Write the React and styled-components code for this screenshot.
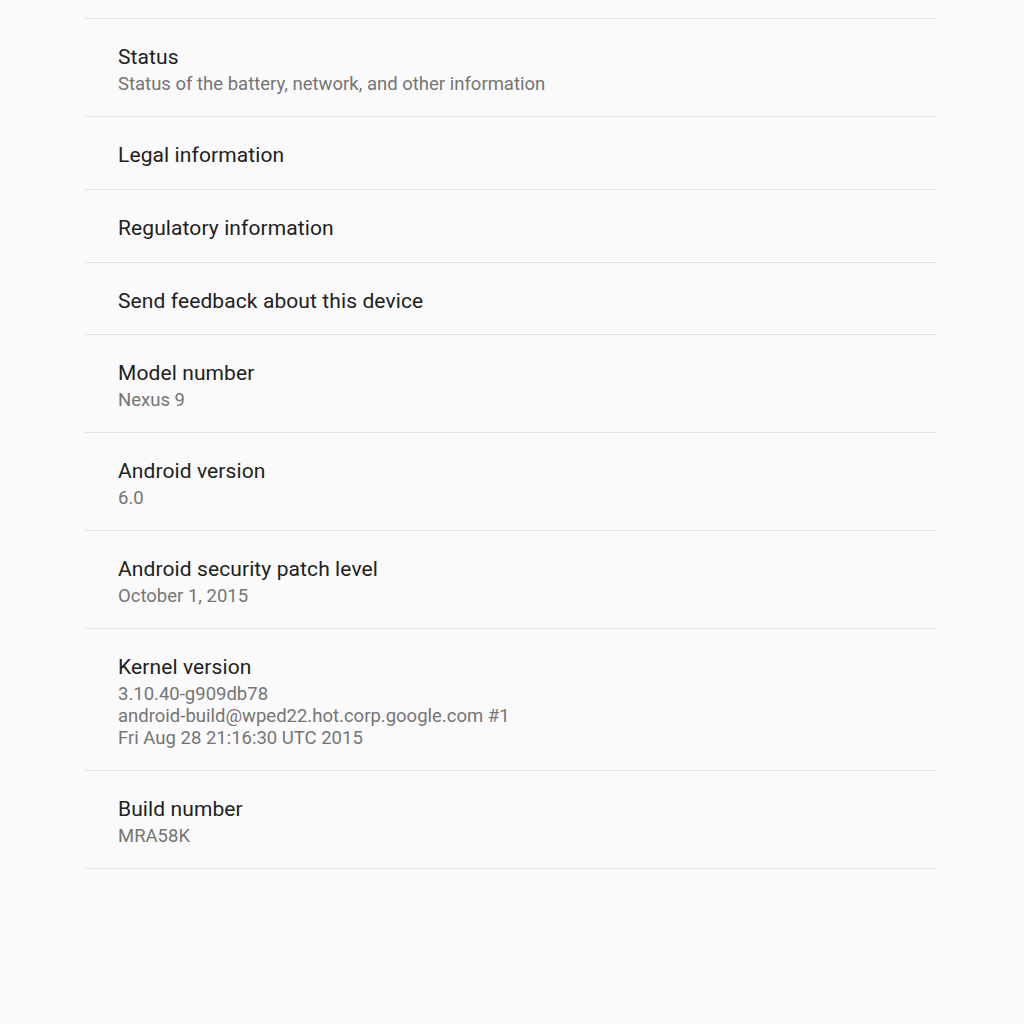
import React from "react";
import styled, { createGlobalStyle } from "styled-components";

const items = [
    { title: "Status", summary: ["Status of the battery, network, and other information"] },
    { title: "Legal information" },
    { title: "Regulatory information" },
    { title: "Send feedback about this device", short: true },
    { title: "Model number", summary: ["Nexus 9"] },
    { title: "Android version", summary: ["6.0"] },
    { title: "Android security patch level", summary: ["October 1, 2015"] },
    {
        title: "Kernel version",
        summary: [
            "3.10.40-g909db78",
            "android-build@wped22.hot.corp.google.com #1",
            "Fri Aug 28 21:16:30 UTC 2015",
        ],
    },
    { title: "Build number", summary: ["MRA58K"] },
];

function bottomPad(p) {
    if (p.$hasSummary) return "21px";
    return p.$short ? "19px" : "20px";
}

export default function App() {
    return (
        <>
            <GlobalStyle />
            <Page>
                <List>
                    {items.map((item) => (
                        <Row
                            key={item.title}
                            $short={item.short}
                            $hasSummary={!!item.summary}
                        >
                            <Title>{item.title}</Title>
                            {item.summary && (
                                <Summary>
                                    {item.summary.map((line) => (
                                        <div key={line}>{line}</div>
                                    ))}
                                </Summary>
                            )}
                        </Row>
                    ))}
                </List>
            </Page>
        </>
    );
}

const GlobalStyle = createGlobalStyle`
    html, body {
        margin: 0;
        padding: 0;
        background: #fafafa;
    }
    body {
        font-family: Roboto, "Noto Sans", sans-serif;
        -webkit-font-smoothing: antialiased;
    }
`;

const Page = styled.div`
    width: 1024px;
    min-height: 1024px;
    background: #fafafa;
    display: flex;
    justify-content: center;
    padding-top: 18px;
    box-sizing: border-box;
`;

const List = styled.div`
    width: 852px;
    margin-left: -2px;
    border-top: 1px solid #e3e3e3;
`;

const Row = styled.div`
    padding: 24px 32px ${bottomPad} 33px;
    border-bottom: 1px solid #e3e3e3;
    display: flex;
    flex-direction: column;
`;

const Title = styled.div`
    font-size: 21px;
    line-height: 28px;
    color: #212121;
    letter-spacing: 0.1px;
`;

const Summary = styled.div`
    margin-top: 2px;
    font-size: 18.5px;
    line-height: 22px;
    color: #757575;
`;
